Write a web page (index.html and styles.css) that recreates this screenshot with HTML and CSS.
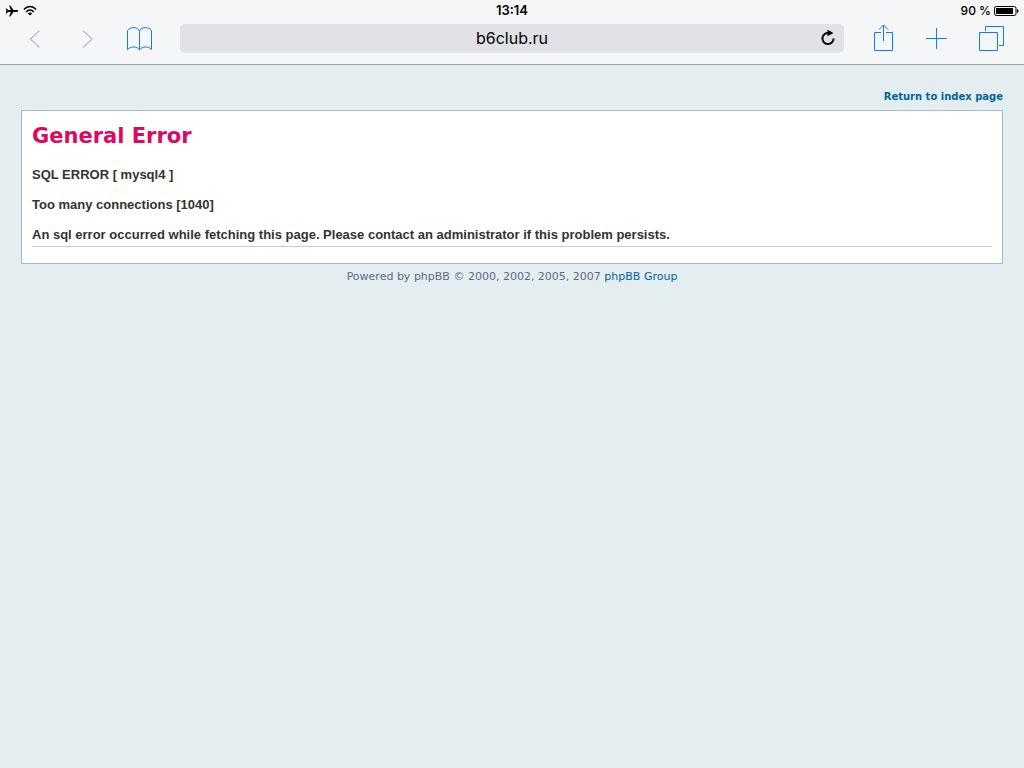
FILE: index.html
```html
<!DOCTYPE html>
<html lang="en">
<head>
<meta charset="utf-8">
<meta name="viewport" content="width=device-width, initial-scale=1">
<title>General Error</title>
<link rel="stylesheet" href="styles.css">
</head>
<body>
<header class="browser">
  <div class="status">
    <div class="status-left">
      <svg width="14" height="12" viewBox="0 0 14 12" aria-label="Airplane mode"><path d="M13.2 6c0-.5-.6-.9-1.400-.9H8.600L5.200.5H4.100l1.700 4.600H3L1.700 3.500H.8L1.400 6 .8 8.500h.9L3 6.900h2.800l-1.700 4.600h1.100l3.400-4.600h3.200c.8 0 1.400-.4 1.400-.9z"/></svg>
      <svg width="14" height="12" viewBox="0 0 14 12" aria-label="Wi-Fi"><g fill="none" stroke="#000" stroke-width="1.500"><path d="M.9 4.400C4.300.6 9.700.6 13.100 4.400"/><path d="M3.100 6.900C5.400 4.500 8.600 4.500 10.900 6.900"/></g><path d="M4.800 8.400q2.200-1.900 4.400 0L7 10.600z"/></svg>
    </div>
    <time class="clock">13:14</time>
    <div class="status-right">
      <span>90 %</span>
      <svg width="25" height="10" viewBox="0 0 25 10" aria-label="Battery"><rect x=".5" y=".5" width="21.500" height="9" rx="1.800" fill="none" stroke="#000"/><rect x="2" y="2" width="17" height="6"/><path d="M23 3q1.600.4 1.600 2T23 7z"/></svg>
    </div>
  </div>
  <div class="toolbar">
    <nav class="nav">
      <button class="tool muted" aria-label="Back"><svg width="28" height="30" viewBox="0 0 28 30"><path d="M18.500 6.500L9.500 15l9 8.500"/></svg></button>
      <button class="tool muted" aria-label="Forward"><svg width="28" height="30" viewBox="0 0 28 30"><path d="M10 6.500L19 15l-9 8.500"/></svg></button>
      <button class="tool" aria-label="Bookmarks"><svg width="28" height="30" viewBox="0 0 28 30"><path d="M14.500 26V7.500C13.500 2.500 5 2.500 2.500 6.500v19C6 22 12 22 14.500 26 17 22 23.500 22 26.500 25.500v-19C24 2.500 15.500 2.500 14.500 7.500"/></svg></button>
    </nav>
    <form class="address">
      <input class="url" type="text" value="b6club.ru" aria-label="Address">
      <button class="reload" type="button" aria-label="Reload"><svg width="16" height="18" viewBox="0 0 16 18"><path d="M9 4A5.600 5.600 0 1 0 13.600 9.500" fill="none" stroke="#000" stroke-width="2"/><path d="M7.500.8L13.500 4 7.500 7.200z"/></svg></button>
    </form>
    <div class="actions">
      <button class="tool" aria-label="Share"><svg width="28" height="30" viewBox="0 0 28 30"><path d="M11 8.500H4.500v18h18v-18H16M13.500 17V1M9 5.500l4.500-4.500 4.500 4.500"/></svg></button>
      <button class="tool" aria-label="New tab"><svg width="28" height="30" viewBox="0 0 28 30"><path d="M3 14.500h21M13.500 4v21"/></svg></button>
      <button class="tool" aria-label="Tabs"><svg width="28" height="30" viewBox="0 0 28 30"><path d="M3.500 8.500h18v18h-18zM9.500 7V2.500h18v19H23"/></svg></button>
    </div>
  </div>
</header>
<main class="page">
  <div class="page-header"><a class="link" href="#">Return to index page</a></div>
  <section class="panel">
    <h1 class="title">General Error</h1>
    <div class="message">
      <p>SQL ERROR [ mysql4 ]</p>
      <p>Too many connections [1040]</p>
      <p>An sql error occurred while fetching this page. Please contact an administrator if this problem persists.</p>
    </div>
  </section>
  <footer class="footer">Powered by phpBB © 2000, 2002, 2005, 2007 <a class="link" href="#">phpBB Group</a></footer>
</main>
</body>
</html>
```
FILE: styles.css
```css
* { box-sizing: border-box; }
body {
  margin: 0;
  min-height: 100vh;
  background: #e4edf0;
  font-family: "DejaVu Sans", Verdana, sans-serif;
}
.browser {
  background: #f5f6f8;
  border-bottom: 1px solid #9aa3ab;
  font-family: Inter, Roboto, sans-serif;
  color: #000;
}
.status {
  display: grid;
  grid-template-columns: 1fr auto 1fr;
  align-items: center;
  height: 20px;
  padding: 1px 5px 0;
  font-size: 12px;
  font-weight: 500;
}
.status-left, .status-right {
  display: flex;
  align-items: center;
  gap: 4px;
}
.status-right {
  justify-content: flex-end;
  gap: 3px;
}
.clock {
  font-weight: 600;
  font-size: 13px;
  line-height: 15px;
}
.toolbar {
  display: flex;
  align-items: flex-start;
  height: 44px;
  padding: 4px 8px 0 9px;
}
.nav, .actions { display: flex; }
.nav { margin-right: 15px; }
.actions {
  gap: 25px;
  margin-left: 26px;
  padding-right: 12px;
}
.tool {
  display: flex;
  align-items: center;
  justify-content: center;
  width: 52px;
  height: 30px;
  padding: 0;
  border: 0;
  background: none;
}
.actions .tool { width: 28px; }
.tool svg {
  flex: none;
  fill: none;
  stroke: #0a7cff;
  stroke-width: 1;
}
.tool.muted svg { stroke: #bfc2c6; stroke-width: 1.5; }
.address {
  position: relative;
  flex: 1;
  display: flex;
}
.url {
  width: 100%;
  height: 29px;
  padding: 0 32px;
  border: 0;
  border-radius: 5px;
  background: #e1e2e6;
  color: #000;
  font: 16px/29px Inter, Roboto, sans-serif;
  text-align: center;
}
.reload {
  position: absolute;
  top: 5px;
  right: 8px;
  display: flex;
  padding: 0;
  border: 0;
  background: none;
}
.page { padding: 24px 21px; }
.page-header {
  padding-bottom: 6px;
  font-size: 10px;
  line-height: 15px;
  font-weight: 700;
  text-align: right;
}
.page-header .link { display: block; }
.link { color: #006699; text-decoration: none; }
.panel {
  padding: 10px 10px 16px;
  border: 1px solid #a9b8c2;
  background: #fff;
}
.title {
  margin: 0 0 16px;
  color: #dd0960;
  font-size: 21px;
  line-height: 30px;
}
.message {
  border-bottom: 1px solid #ccc;
  color: #333;
  font: 700 13px/15px "Liberation Sans", Arial, sans-serif;
}
.message p { margin: 0 0 15px; }
.message p:last-child { margin-bottom: 4px; }
.footer {
  padding-top: 5px;
  color: #5c6b87;
  font-size: 11px;
  line-height: 16px;
  text-align: center;
}
```
